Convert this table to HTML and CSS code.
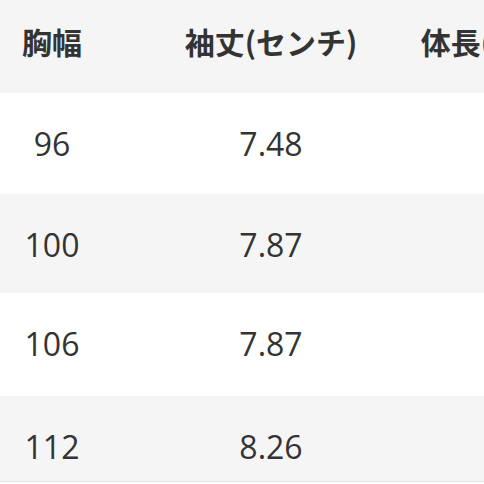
FILE: index.html
```html
<!DOCTYPE html>
<html lang="ja">
<head>
<meta charset="utf-8">
<link rel="stylesheet" href="styles.css">
</head>
<body>
<div class="table">
  <div class="row head">
    <div class="cell">胸幅</div>
    <div class="cell">袖丈(センチ)</div>
    <div class="cell">体長(センチ)</div>
  </div>
  <div class="row r1">
    <div class="cell">96</div>
    <div class="cell">7.48</div>
    <div class="cell"></div>
  </div>
  <div class="row r2 alt">
    <div class="cell">100</div>
    <div class="cell">7.87</div>
    <div class="cell"></div>
  </div>
  <div class="row r3">
    <div class="cell">106</div>
    <div class="cell">7.87</div>
    <div class="cell"></div>
  </div>
  <div class="row r4 alt last">
    <div class="cell">112</div>
    <div class="cell">8.26</div>
    <div class="cell"></div>
  </div>
</div>
</body>
</html>
```

FILE: styles.css
```css
html, body {
  margin: 0;
  padding: 0;
  background: #ffffff;
  overflow: hidden;
  width: 484px;
  height: 484px;
}
.table {
  width: 576px;
  font-family: "Open Sans", "Noto Sans CJK JP", sans-serif;
  color: #333333;
}
.row {
  display: grid;
  grid-template-columns: 104px 334px 138px;
  box-sizing: border-box;
}
.cell {
  display: flex;
  justify-content: center;
  white-space: nowrap;
}
.head {
  height: 93px;
  background: #f5f5f5;
  align-items: center;
  font-family: "Noto Sans CJK JP", sans-serif;
  font-weight: 700;
  font-size: 30px;
  line-height: 30px;
  padding-bottom: 11px;
  color: #333333;
}
.r1, .r2, .r3, .r4 {
  font-size: 32px;
  line-height: 32px;
  padding-top: 35px;
}
.r1 { height: 101px; }
.r2 { height: 99px; }
.r3 { height: 103px; }
.r4 { height: 86px; }
.alt { background: #f5f5f5; }
.last { border-bottom: 1px solid #e2e2e2; }
```
